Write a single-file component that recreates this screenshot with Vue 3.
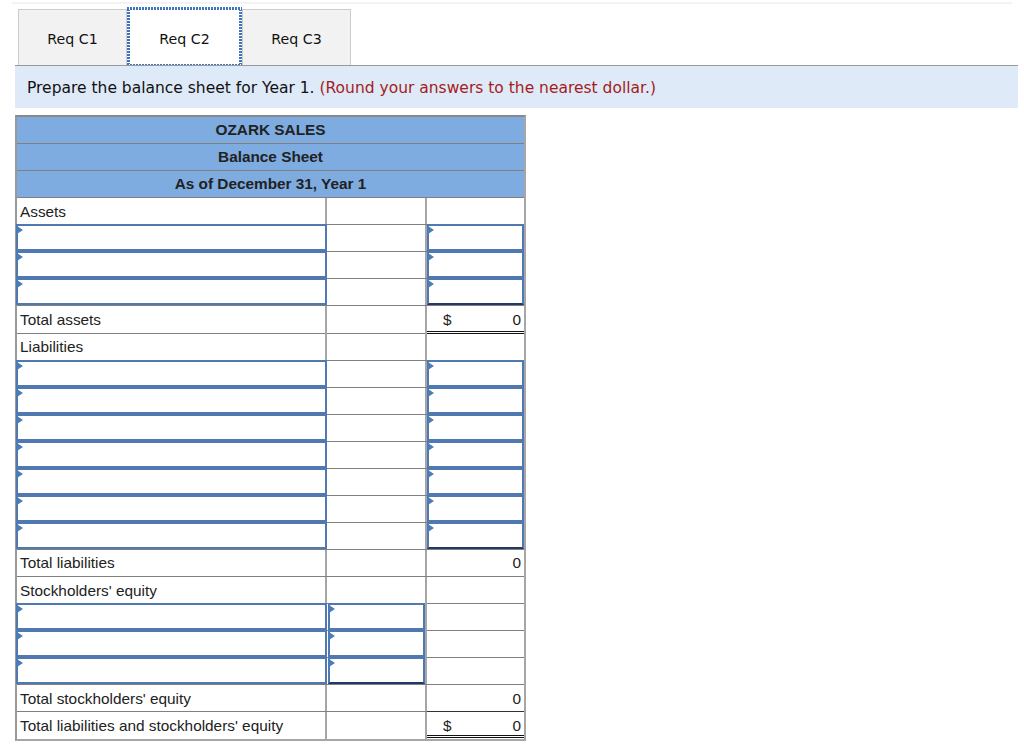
<script setup>
// row kinds: label = plain text, input = editable cell with corner marker
const rows = [
  { label: "Assets" },
  { a: true, c: true },
  { a: true, c: true },
  { a: true, c: true, cLast: true },
  { label: "Total assets", dollar: true, value: "0", dbl: true },
  { label: "Liabilities" },
  { a: true, c: true },
  { a: true, c: true },
  { a: true, c: true },
  { a: true, c: true },
  { a: true, c: true },
  { a: true, c: true },
  { a: true, c: true, cLast: true },
  { label: "Total liabilities", value: "0" },
  { label: "Stockholders' equity" },
  { a: true, b: true },
  { a: true, b: true },
  { a: true, b: true, bLast: true },
  { label: "Total stockholders' equity", value: "0" },
  { label: "Total liabilities and stockholders' equity", dollar: true, value: "0", dbl: true, top: true },
];
const tabs = ["Req C1", "Req C2", "Req C3"];
</script>

<template>
  <div class="page">
    <div class="strip"></div>
    <div class="tabs">
      <div v-for="(t, i) in tabs" :key="t" class="tab" :class="{ active: i === 1 }">{{ t }}</div>
    </div>
    <div class="prompt">
      Prepare the balance sheet for Year 1. <span class="note">(Round your answers to the nearest dollar.)</span>
    </div>
    <div class="sheet">
      <div class="head">OZARK SALES</div>
      <div class="head">Balance Sheet</div>
      <div class="head">As of December 31, Year 1</div>
      <div v-for="(r, i) in rows" :key="i" class="row">
        <div class="cell first" :class="{ input: r.a }">{{ r.label }}</div>
        <div class="cell mid" :class="{ input: r.b, last: r.bLast }"></div>
        <div class="cell num" :class="{ input: r.c, last: r.cLast, dbl: r.dbl, top: r.top }">
          <span v-if="r.dollar" class="dollar">$</span>
          <span v-if="r.value" class="val">{{ r.value }}</span>
        </div>
      </div>
    </div>
  </div>
</template>

<style>
body { margin: 0; background: #fff; }
</style>

<style scoped>
.page { width: 1024px; height: 748px; overflow: hidden; box-sizing: border-box; padding-top: 2px; }
.strip { height: 2px; margin: 0 12px; background: #f3f3f3; }
.tabs { display: flex; margin: 5px 0 0 18px; height: 56px; }
.tab { width: 109px; box-sizing: border-box; display: flex; align-items: center; justify-content: center; background: #f2f2f2; border: 1px solid #ccc; border-bottom: 0; font: 14.2px "DejaVu Sans", Verdana, sans-serif; color: #111; padding-top: 3px; }
.tab.active { position: relative; width: 111px; margin: 0 2px; background: #fff; border: 0; z-index: 1; }
.tab.active::after {
  content: "";
  position: absolute;
  inset: -2px -2px 0 -2px;
  background:
    repeating-linear-gradient(90deg, #3f74bd 0 2px, #fff 2px 3px) top / 100% 3px no-repeat,
    repeating-linear-gradient(90deg, #3f74bd 0 2px, #fff 2px 3px) bottom / 100% 1px no-repeat,
    repeating-linear-gradient(0deg, #3f74bd 0 2px, #fff 2px 3px) left / 3px 100% no-repeat,
    repeating-linear-gradient(0deg, #3f74bd 0 2px, #fff 2px 3px) right / 3px 100% no-repeat;
  -webkit-mask: linear-gradient(#000 0 0) top / 100% 3px no-repeat, linear-gradient(#000 0 0) bottom / 100% 1px no-repeat, linear-gradient(#000 0 0) left / 3px 100% no-repeat, linear-gradient(#000 0 0) right / 3px 100% no-repeat;
}
.prompt { margin-left: 15px; width: 1003px; height: 43px; box-sizing: border-box; background: #deeaf8; border-top: 1px solid #999; padding: 13px 0 0 12px; font: 15.5px "DejaVu Sans", Verdana, sans-serif; color: #111; }
.note { color: #a51c1c; }
.sheet { margin: 7px 0 0 15px; width: 511px; box-sizing: border-box; border: 2px solid #a6a6a6; border-top-color: #888; border-left-color: #999; font: 15.35px "Liberation Sans", Arial, sans-serif; color: #222; }
.head { height: 27.07px; box-sizing: border-box; background: #7eabe0; border-bottom: 1px solid #808080; text-align: center; font-weight: 700; line-height: 26px; }
.row { display: grid; grid-template-columns: 310px 100px 97px; height: 27.07px; box-sizing: border-box; border-bottom: 1px solid #808080; }
.row:last-child { border-bottom: 0; }
.cell { position: relative; box-sizing: border-box; border-right: 2px solid #a6a6a6; padding: 4.45px 0 0 3px; line-height: 18px; white-space: nowrap; }
.cell:last-child { border-right: 0; }
.cell.input { margin-top: -1px; height: 27.07px; border: 2px solid #4f79b0; background: #fff; }
.cell.first.input { margin: -1px 0 0 -1px; }
.cell.mid.input { margin: -1px 2px 0 1px; box-shadow: 2px 0 0 #a6a6a6; }
.cell.input::before { content: ""; position: absolute; left: -1px; top: 0; border-left: 6px solid #4a7ebb; border-top: 4.5px solid transparent; border-bottom: 4.5px solid transparent; }
.cell.input.last { border-bottom-color: #1f3a66; }
.num { display: flex; justify-content: space-between; }
.dollar { margin-left: 13px; }
.val { margin-left: auto; margin-right: 3px; }
.cell.dbl { border-bottom: 3px double #111; height: 27.07px; }
.cell.top { border-top: 1px solid #333; margin-top: -1px; }
</style>
